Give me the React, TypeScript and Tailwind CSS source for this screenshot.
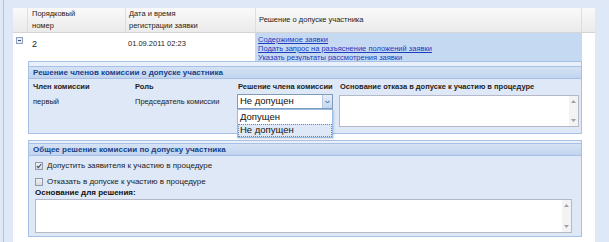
import React from "react";

const F = { fontFamily: '"Liberation Sans", Arial, sans-serif' };

function ScrollTextarea({ className }: { className: string }) {
  return (
    <div className={`relative flex border border-[#b5b8c8] bg-white ${className}`}>
      <div className="flex-1" />
      <div className="flex w-[9px] flex-col items-center justify-between bg-[#f3f3f3] py-[4px]">
        <svg width="5" height="3" viewBox="0 0 5 3"><path d="M0 3 L2.5 0 L5 3 Z" fill="#9aa2ad" /></svg>
        <svg width="5" height="3" viewBox="0 0 5 3"><path d="M0 0 L2.5 3 L5 0 Z" fill="#9aa2ad" /></svg>
      </div>
    </div>
  );
}

function Checkbox({ checked }: { checked?: boolean }) {
  return (
    <span className="flex h-[8px] w-[8px] items-center justify-center border border-[#8e9bb0] bg-gradient-to-b from-[#f0f0f0] to-[#dadada]">
      {checked && (
        <svg width="6" height="6" viewBox="0 0 6 6">
          <path d="M0.8 3 L2.3 4.7 L5.3 1" stroke="#3a4a6a" strokeWidth="1.1" fill="none" />
        </svg>
      )}
    </span>
  );
}

export default function App() {
  return (
    <div style={F} className="flex h-[242px] w-[609px] overflow-hidden bg-[#dfe8f6] text-[7.5px] text-[#222]">
      <div className="w-[13px] pl-[3px]">
        <div className="h-full w-px bg-[#a9c2e6]" />
      </div>
      <div className="mt-[8px] flex w-[582px] flex-col bg-white">
        {/* header */}
        <div className="flex h-[25px] border-b border-[#d4d4d4] bg-gradient-to-b from-[#f9f9f9] to-[#ebebeb] leading-[12px]">
          <div className="w-[14px]" />
          <div className="flex w-[98px] flex-col justify-center border-l border-[#dedede] pl-[4px]">
            <span>Порядковый</span>
            <span>номер</span>
          </div>
          <div className="flex w-[130px] flex-col justify-center border-l border-[#dedede] pl-[3px]">
            <span>Дата и время</span>
            <span>регистрации заявки</span>
          </div>
          <div className="flex w-[326px] items-center border-l border-[#dedede] pl-[3px]">
            Решение о допуске участника
          </div>
          <div className="flex-1 border-l border-[#dedede]" />
        </div>
        {/* data row */}
        <div className="flex h-[28px]">
          <div className="w-[14px] pl-[3px] pt-[4px]">
            <div className="flex h-[7px] w-[7px] items-center justify-center border border-[#8ea0bd] bg-[#e8eef7]">
              <div className="h-px w-[3px] bg-[#3a4a6a]" />
            </div>
          </div>
          <div className="w-[98px] pl-[5px] pt-[5px] text-[9px]">2</div>
          <div className="w-[130px] pl-[3px] pt-[5px]">01.09.2011 02:23</div>
          <div className="flex w-[327px] flex-col bg-[#c6d9f3] pl-[3px] pt-[2px] leading-[9px] text-[#1c3cbc] underline">
            <span>Содержимое заявки</span>
            <span>Подать запрос на разъяснение положений заявки</span>
            <span>Указать результаты рассмотрения заявки</span>
          </div>
          <div className="flex-1" />
        </div>
        {/* expanded body */}
        <div className="flex flex-col pl-[15px] pr-[13px]">
          {/* fieldset 1 */}
          <div className="relative flex h-[73px] flex-col border border-[#a6c0e6] bg-[#dfe8f6]">
            <div className="h-[4px] bg-[#e9f0f9]" />
            <div className="flex h-[13px] items-center border-y border-[#a6c0e6] bg-gradient-to-b from-[#d5e2f4] to-[#c1d4ef] pl-[4px] text-[8px] font-bold text-[#15428b]">
              Решение членов комиссии о допуске участника
            </div>
            <div className="grid grid-cols-[102px_103px_102px_1fr] pl-[4px] pt-[3px]">
              <div className="font-bold leading-[10px]">Член комиссии</div>
              <div className="font-bold leading-[10px]">Роль</div>
              <div className="font-bold leading-[10px]">Решение члена комиссии</div>
              <div className="font-bold leading-[10px]">Основание отказа в допуске к участию в процедуре</div>
              <div className="pt-[5px] leading-[10px]">первый</div>
              <div className="pt-[5px] leading-[10px]">Председатель комиссии</div>
              <div className="relative -ml-[1px] pt-[2px]">
                <div className="flex h-[15px] w-[96px] items-center border border-[#7f9db9] bg-white">
                  <span className="flex-1 pl-[2px] text-[9.5px] text-[#111]">Не допущен</span>
                  <span className="flex h-full w-[10px] items-center justify-center border-l border-[#b5c8e4] bg-gradient-to-b from-[#e6eefa] to-[#c5d6ef]">
                    <svg width="5" height="4" viewBox="0 0 5 4"><path d="M0.5 0.8 L2.5 3 L4.5 0.8" stroke="#3b5a8c" strokeWidth="1" fill="none" /></svg>
                  </span>
                </div>
                <div className="absolute left-0 top-[17px] z-10 flex w-[96px] flex-col border border-[#99bbe8] bg-white pt-[1px] text-[9.5px] text-[#111] shadow-[1px_1px_2px_rgba(0,0,0,0.15)]">
                  <div className="flex h-[13px] items-center pl-[2px]">Допущен</div>
                  <div className="flex h-[13px] items-center border border-dotted border-[#6a86b8] bg-[#dfe8f6] pl-[1px]">Не допущен</div>
                </div>
              </div>
              <div className="-ml-[1px] pt-[3px]">
                <ScrollTextarea className="h-[32px] w-[240px]" />
              </div>
            </div>
          </div>
          {/* fieldset 2 */}
          <div className="mt-[6px] flex h-[97px] flex-col border border-[#a6c0e6] bg-[#dfe8f6]">
            <div className="h-[2px] bg-[#e9f0f9]" />
            <div className="flex h-[13px] items-center border-y border-[#a6c0e6] bg-gradient-to-b from-[#d5e2f4] to-[#c1d4ef] pl-[4px] text-[8px] font-bold text-[#15428b]">
              Общее решение комиссии по допуску участника
            </div>
            <div className="flex flex-col pl-[6px] pr-[9px] text-[8px]">
              <div className="mt-[5px] flex h-[9px] items-center gap-[4px]">
                <Checkbox checked />
                <span>Допустить заявителя к участию в процедуре</span>
              </div>
              <div className="mt-[7px] flex h-[9px] items-center gap-[4px]">
                <Checkbox />
                <span>Отказать в допуске к участию в процедуре</span>
              </div>
              <div className="mt-[2px] font-bold leading-[10px] text-[#111]">Основание для решения:</div>
              <ScrollTextarea className="mt-[1px] h-[34px] w-full" />
            </div>
          </div>
        </div>
      </div>
      <div className="flex-1" />
    </div>
  );
}
